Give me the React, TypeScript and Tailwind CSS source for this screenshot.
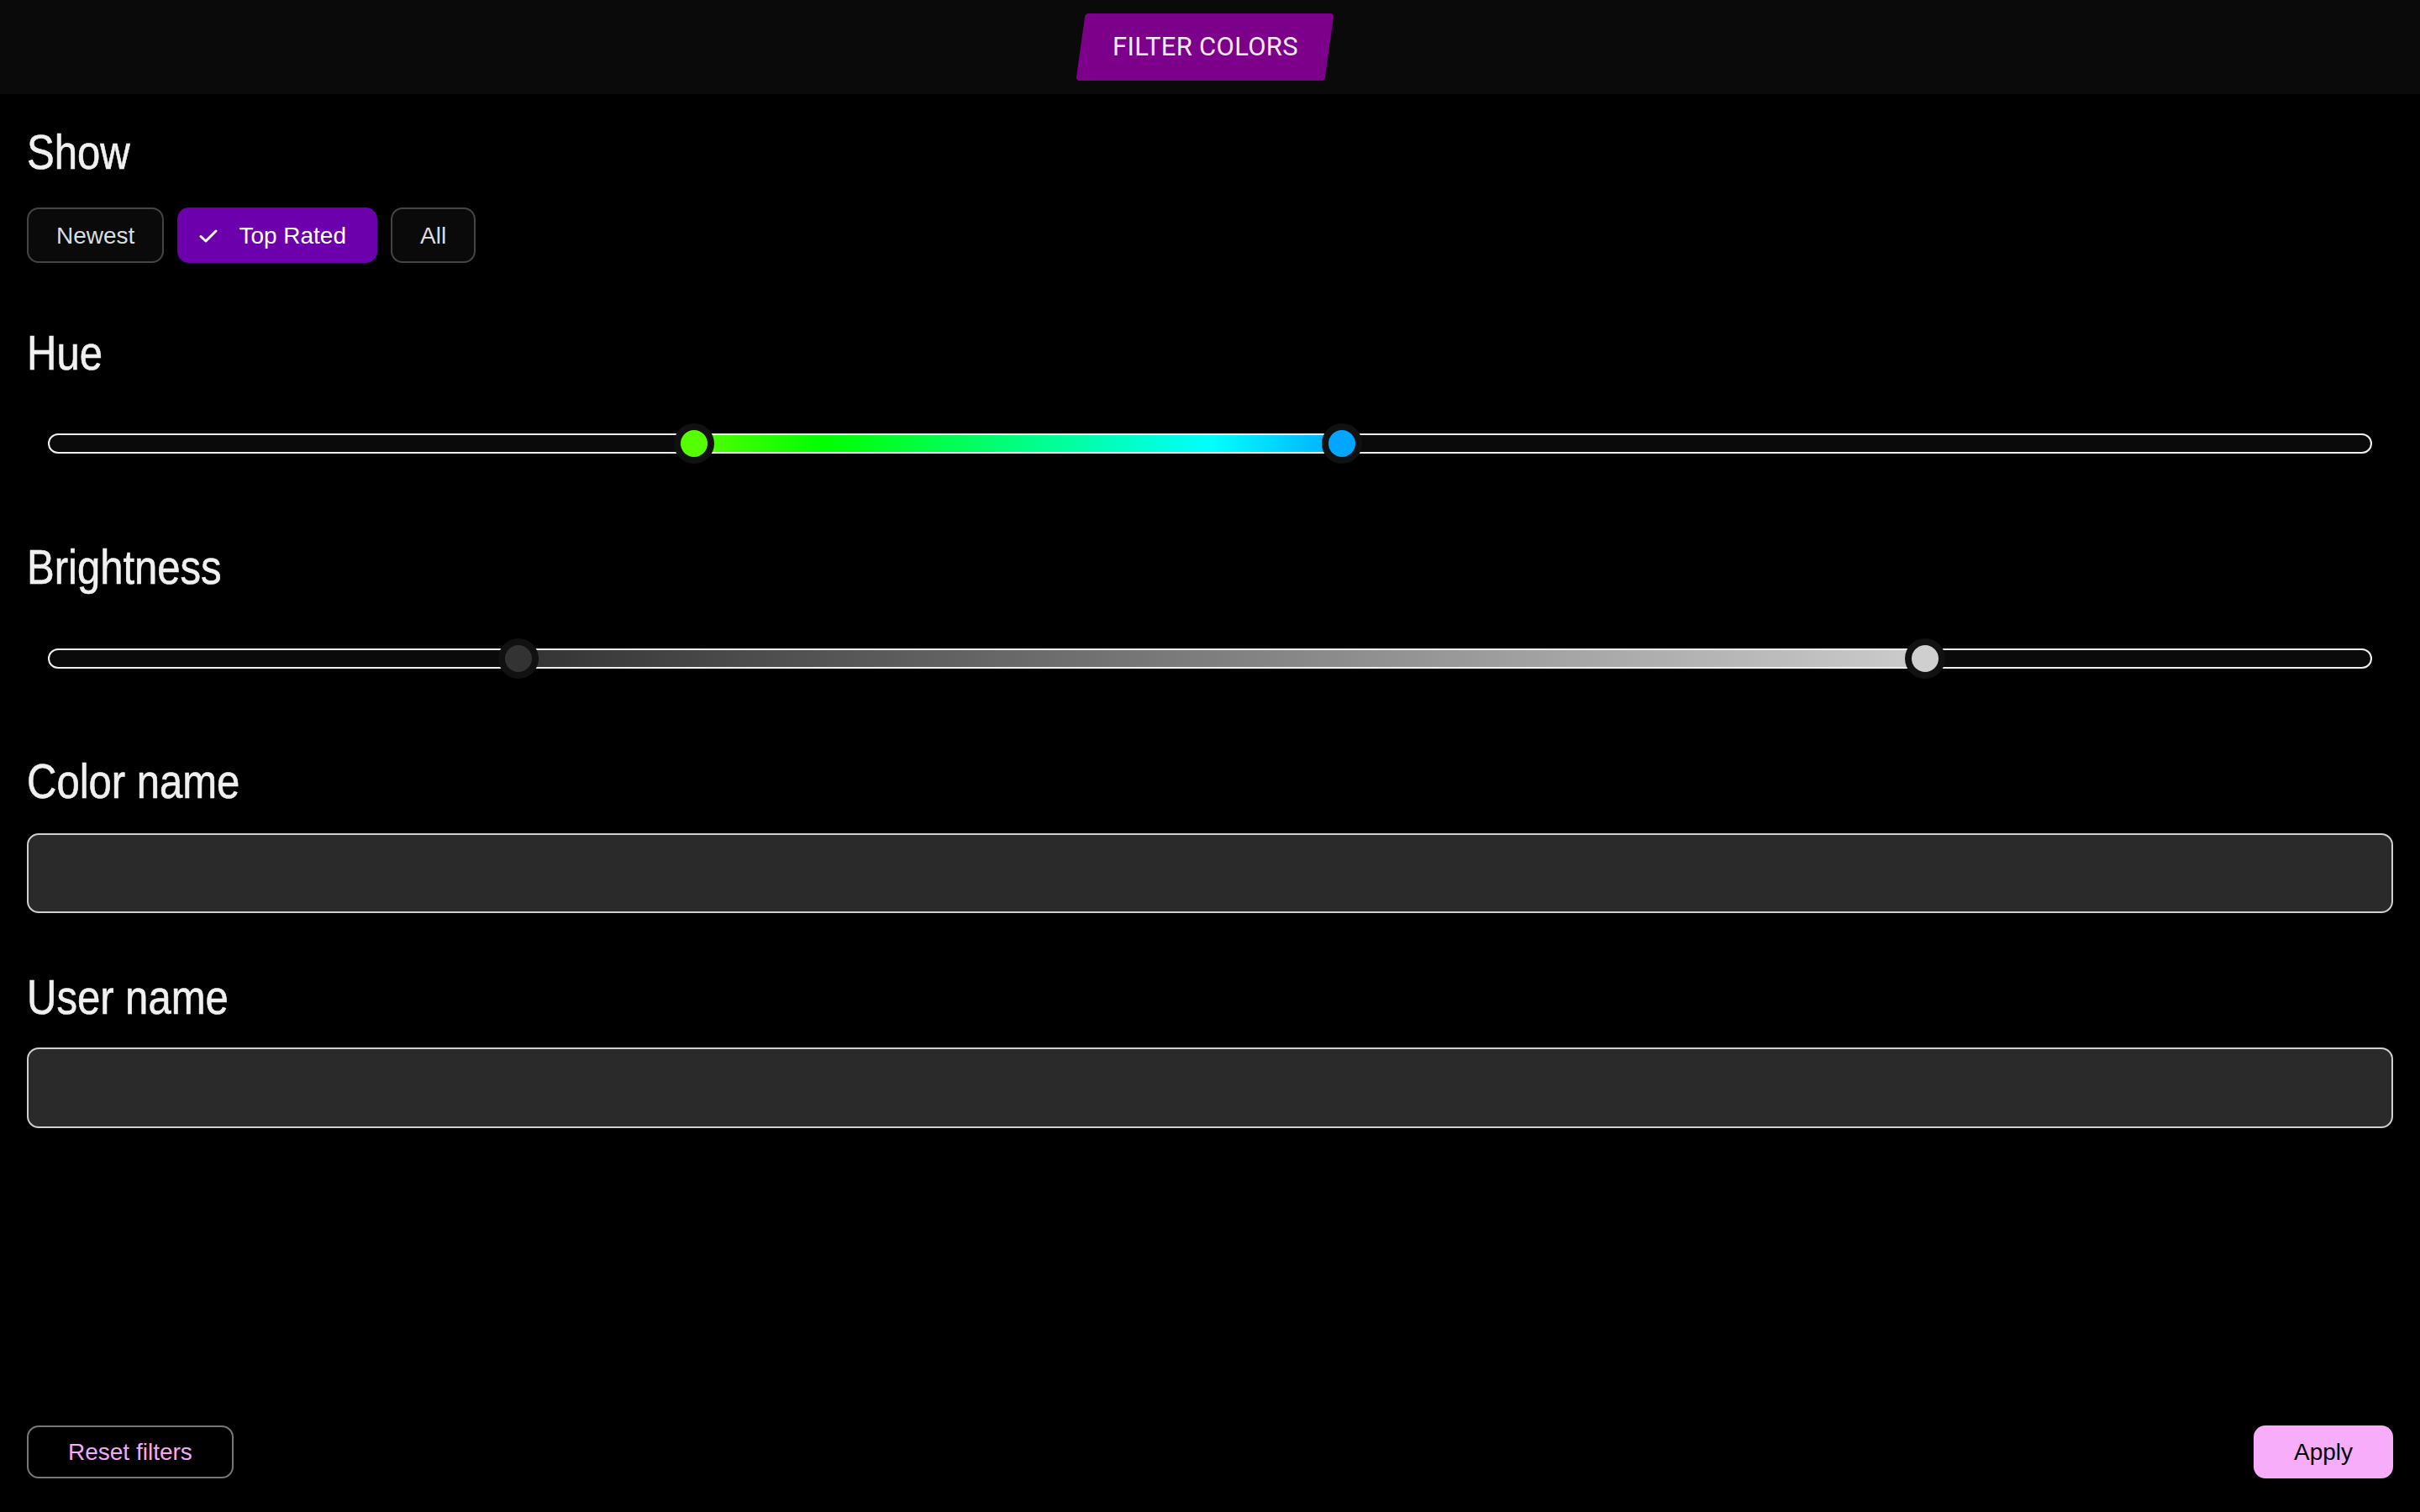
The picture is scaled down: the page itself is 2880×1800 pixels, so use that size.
import { useState } from "react";

type Range = { min: number; max: number };

const headingFont = {
  fontFamily: '"Liberation Sans", Arial, sans-serif',
};

function Heading({ children, className }: { children: string; className?: string }) {
  return (
    <h2
      className={
        "text-[57px] leading-[67px] text-[#f0f0f0] font-normal origin-left scale-x-[0.86] [-webkit-text-stroke:0.6px_#f0f0f0] " +
        (className ?? "")
      }
      style={headingFont}
    >
      {children}
    </h2>
  );
}

function CheckIcon() {
  return (
    <svg width="22" height="16" viewBox="0 0 22 16" fill="none">
      <path d="M2 8.5 8 14 20 2" stroke="white" strokeWidth="3" strokeLinecap="round" strokeLinejoin="round" />
    </svg>
  );
}

function Thumb({ pos, color }: { pos: number; color: string }) {
  return (
    <div
      className="absolute top-1/2 -translate-x-1/2 -translate-y-1/2 w-[48px] h-[48px] rounded-full bg-[#111111] flex items-center justify-center"
      style={{ left: `${pos * 100}%` }}
    >
      <div className="w-[32px] h-[32px] rounded-full" style={{ background: color }} />
    </div>
  );
}

function RangeSlider({
  value,
  scale,
  fill,
  thumbColor,
}: {
  value: Range;
  scale: number;
  fill: string;
  thumbColor: (v: number) => string;
}) {
  const a = value.min / scale;
  const b = value.max / scale;
  return (
    <div className="h-[48px] flex items-center px-[25px]">
      <div className="relative w-full h-[24px] rounded-full border-2 border-[#eeeeee] bg-[#0a0a0a]">
        <div
          className="absolute top-0 bottom-0"
          style={{ left: `${a * 100}%`, width: `${(b - a) * 100}%`, background: fill }}
        />
        <Thumb pos={a} color={thumbColor(value.min)} />
        <Thumb pos={b} color={thumbColor(value.max)} />
      </div>
    </div>
  );
}

export default function App() {
  const [show, setShow] = useState("Top Rated");
  const [hue] = useState<Range>({ min: 100, max: 200.5 });
  const [brightness] = useState<Range>({ min: 20.2, max: 80.8 });
  const [colorName, setColorName] = useState("");
  const [userName, setUserName] = useState("");

  const options = ["Newest", "Top Rated", "All"];
  const bodyFont = { fontFamily: '"Liberation Sans", Arial, sans-serif' };

  return (
    <div className="h-screen flex flex-col bg-black" style={bodyFont}>
      {/* Top bar */}
      <div className="h-[112px] bg-[#0a0a0a] flex justify-center items-start pt-[16px] shrink-0">
        <div className="h-[80px] w-[296px] mr-[12px] -skew-x-[8deg] rounded-[4px] bg-[#7d008b] flex items-center justify-center">
          <span
            className="skew-x-[8deg] text-[31px] text-[#f2eaf2] tracking-[0.3px]"
            style={{ fontFamily: 'Roboto, "Liberation Sans", sans-serif' }}
          >
            FILTER COLORS
          </span>
        </div>
      </div>

      {/* Filters */}
      <div className="flex-1 px-8 pt-[36px]">
        <Heading>Show</Heading>
        <div className="flex gap-[16px] mt-[32px]">
          {options.map((opt) => {
            const active = opt === show;
            return (
              <button
                key={opt}
                onClick={() => setShow(opt)}
                className={
                  active
                    ? "h-[66px] pl-[26px] pr-[37px] pt-[2px] rounded-[14px] bg-[#6c00ad] text-white text-[28px] flex items-center gap-[25px]"
                    : "h-[66px] px-[33px] pt-[2px] rounded-[14px] border-2 border-[#444444] bg-[#0a0a0a] text-[#dddddd] text-[28px] flex items-center"
                }
              >
                {active && <CheckIcon />}
                {opt}
              </button>
            );
          })}
        </div>

        <Heading className="mt-[74px]">Hue</Heading>
        <div className="mt-[50px]">
          <RangeSlider
            value={hue}
            scale={360}
            fill="linear-gradient(to right, hsl(100,100%,50%), hsl(120,100%,50%) 20%, hsl(150,100%,50%) 50%, hsl(180,100%,50%) 80%, hsl(200,100%,50%))"
            thumbColor={(v) => `hsl(${Math.round(v)},100%,50%)`}
          />
        </div>

        <Heading className="mt-[90px]">Brightness</Heading>
        <div className="mt-[51px]">
          <RangeSlider
            value={brightness}
            scale={100}
            fill="linear-gradient(to right, #333333, #cccccc)"
            thumbColor={(v) => `hsl(0,0%,${Math.round(v)}%)`}
          />
        </div>

        <Heading className="mt-[89px]">Color name</Heading>
        <input
          value={colorName}
          onChange={(e) => setColorName(e.target.value)}
          className="mt-[28px] block w-full h-[95px] rounded-[14px] border-2 border-[#cfcfcf] bg-[#2a2a2a] px-6 text-[28px] text-white outline-none"
        />

        <Heading className="mt-[67px]">User name</Heading>
        <input
          value={userName}
          onChange={(e) => setUserName(e.target.value)}
          className="mt-[26px] block w-full h-[96px] rounded-[14px] border-2 border-[#cfcfcf] bg-[#2a2a2a] px-6 text-[28px] text-white outline-none"
        />
      </div>

      {/* Bottom actions */}
      <div className="flex justify-between px-8 pb-[40px] shrink-0">
        <button className="h-[63px] px-[47px] rounded-[14px] border-2 border-[#777777] bg-black text-[#f7a8f7] text-[28px]">
          Reset filters
        </button>
        <button className="h-[63px] px-[48px] rounded-[14px] bg-[#f8adfb] text-black text-[28px]">
          Apply
        </button>
      </div>
    </div>
  );
}
